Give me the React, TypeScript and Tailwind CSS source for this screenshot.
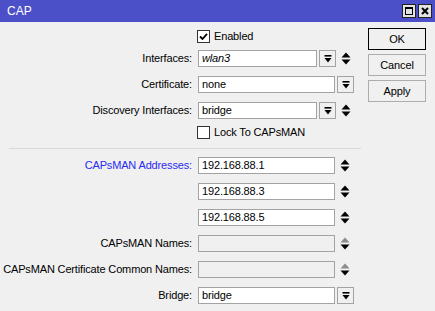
import type { ReactNode } from "react";

function DropIcon() {
  return (
    <svg width="8" height="8" viewBox="0 0 8 8">
      <rect x="0.5" y="0" width="7" height="1.6" fill="#000" />
      <polygon points="0.5,3 7.5,3 4,7.5" fill="#000" />
    </svg>
  );
}

function Spinner({ disabled = false }: { disabled?: boolean }) {
  return (
    <svg width="10" height="13" viewBox="0 0 10 13" className="ml-[5px] shrink-0">
      <polygon points="5,0.5 9.5,5.5 0.5,5.5" fill={disabled ? "#8c8c8c" : "#000"} />
      <polygon points="0.5,7.5 9.5,7.5 5,12.5" fill="#000" />
    </svg>
  );
}

function DropButton() {
  return (
    <div className="ml-[2px] flex h-[17px] w-[17px] shrink-0 items-center justify-center border border-[#a3a3a3] bg-[#f0f0f0]">
      <DropIcon />
    </div>
  );
}

function Field({
  value = "",
  width,
  italic = false,
  disabled = false,
}: {
  value?: string;
  width: string;
  italic?: boolean;
  disabled?: boolean;
}) {
  return (
    <div
      className={`flex h-[17px] ${width} shrink-0 items-center border border-[#a3a3a3] pl-[3px] ${
        disabled ? "bg-[#f0f0f0]" : "bg-white"
      } ${italic ? "italic" : ""}`}
    >
      {value}
    </div>
  );
}

function Row({ label, blue = false, children }: { label?: string; blue?: boolean; children: ReactNode }) {
  return (
    <div className="flex h-[17px] items-center">
      <div className={`w-[192px] shrink-0 whitespace-nowrap text-right ${blue ? "text-[#2a2af0]" : "text-black"}`}>
        {label ? `${label}:` : ""}
      </div>
      <div className="ml-[6px] flex items-center">{children}</div>
    </div>
  );
}

function Check({ label, checked }: { label: string; checked: boolean }) {
  return (
    <div className="flex h-[13px] items-center">
      <div className="ml-[197px] flex h-[13px] w-[13px] items-center justify-center border border-[#333] bg-white">
        {checked && (
          <svg width="9" height="9" viewBox="0 0 9 9">
            <path d="M1 4.5 L3.5 7 L8 1.8" stroke="#000" strokeWidth="1.8" fill="none" />
          </svg>
        )}
      </div>
      <span className="ml-[4px]">{label}</span>
    </div>
  );
}

function Btn({ label, primary = false }: { label: string; primary?: boolean }) {
  return (
    <div
      className={`flex h-[22px] w-[58px] items-center justify-center bg-[#f0f0f0] ${
        primary ? "border border-black" : "border border-[#adadad]"
      }`}
    >
      {label}
    </div>
  );
}

export default function App() {
  return (
    <div className="h-[311px] w-[435px] overflow-hidden bg-[#f0f0f0] font-['Liberation_Sans',Arial,sans-serif] text-[11px] tracking-[-0.15px] text-black">
      {/* title bar */}
      <div className="flex h-[22px] items-center bg-[#4b4fc8] pl-[7px] pr-[3px]">
        <span className="text-[12px] tracking-normal text-white">CAP</span>
        <div className="ml-auto flex gap-[2px]">
          <div className="flex h-[14px] w-[14px] items-center justify-center border border-[#222] bg-[#e3e3e3]">
            <div className="h-[8px] w-[8px] border border-t-2 border-black" />
          </div>
          <div className="flex h-[14px] w-[14px] items-center justify-center border border-[#222] bg-[#e3e3e3]">
            <svg width="8" height="8" viewBox="0 0 8 8">
              <path d="M1 1 L7 7 M7 1 L1 7" stroke="#000" strokeWidth="2" />
            </svg>
          </div>
        </div>
      </div>

      <div className="flex">
        {/* form */}
        <div className="flex w-[362px] flex-col pt-[8px]">
          <Check label="Enabled" checked />
          <div className="mt-[7px] flex flex-col gap-[9px]">
            <Row label="Interfaces">
              <Field value="wlan3" width="w-[119px]" italic />
              <DropButton />
              <Spinner />
            </Row>
            <Row label="Certificate">
              <Field value="none" width="w-[137px]" />
              <DropButton />
            </Row>
            <Row label="Discovery Interfaces">
              <Field value="bridge" width="w-[119px]" />
              <DropButton />
              <Spinner />
            </Row>
          </div>
          <div className="mt-[7px]">
            <Check label="Lock To CAPsMAN" checked={false} />
          </div>

          <div className="ml-[9px] mt-[9px] h-px w-[352px] bg-[#d9d9d9]" />

          <div className="mt-[8px] flex flex-col gap-[9px]">
            <Row label="CAPsMAN Addresses" blue>
              <Field value="192.168.88.1" width="w-[137px]" />
              <Spinner />
            </Row>
            <Row>
              <Field value="192.168.88.3" width="w-[137px]" />
              <Spinner />
            </Row>
            <Row>
              <Field value="192.168.88.5" width="w-[137px]" />
              <Spinner />
            </Row>
            <Row label="CAPsMAN Names">
              <Field width="w-[137px]" disabled />
              <Spinner disabled />
            </Row>
            <Row label="CAPsMAN Certificate Common Names">
              <Field width="w-[137px]" disabled />
              <Spinner disabled />
            </Row>
            <Row label="Bridge">
              <Field value="bridge" width="w-[137px]" />
              <DropButton />
            </Row>
          </div>
        </div>

        {/* buttons */}
        <div className="ml-[6px] flex flex-col gap-[4px] pt-[6px]">
          <Btn label="OK" primary />
          <Btn label="Cancel" />
          <Btn label="Apply" />
        </div>
      </div>
    </div>
  );
}
